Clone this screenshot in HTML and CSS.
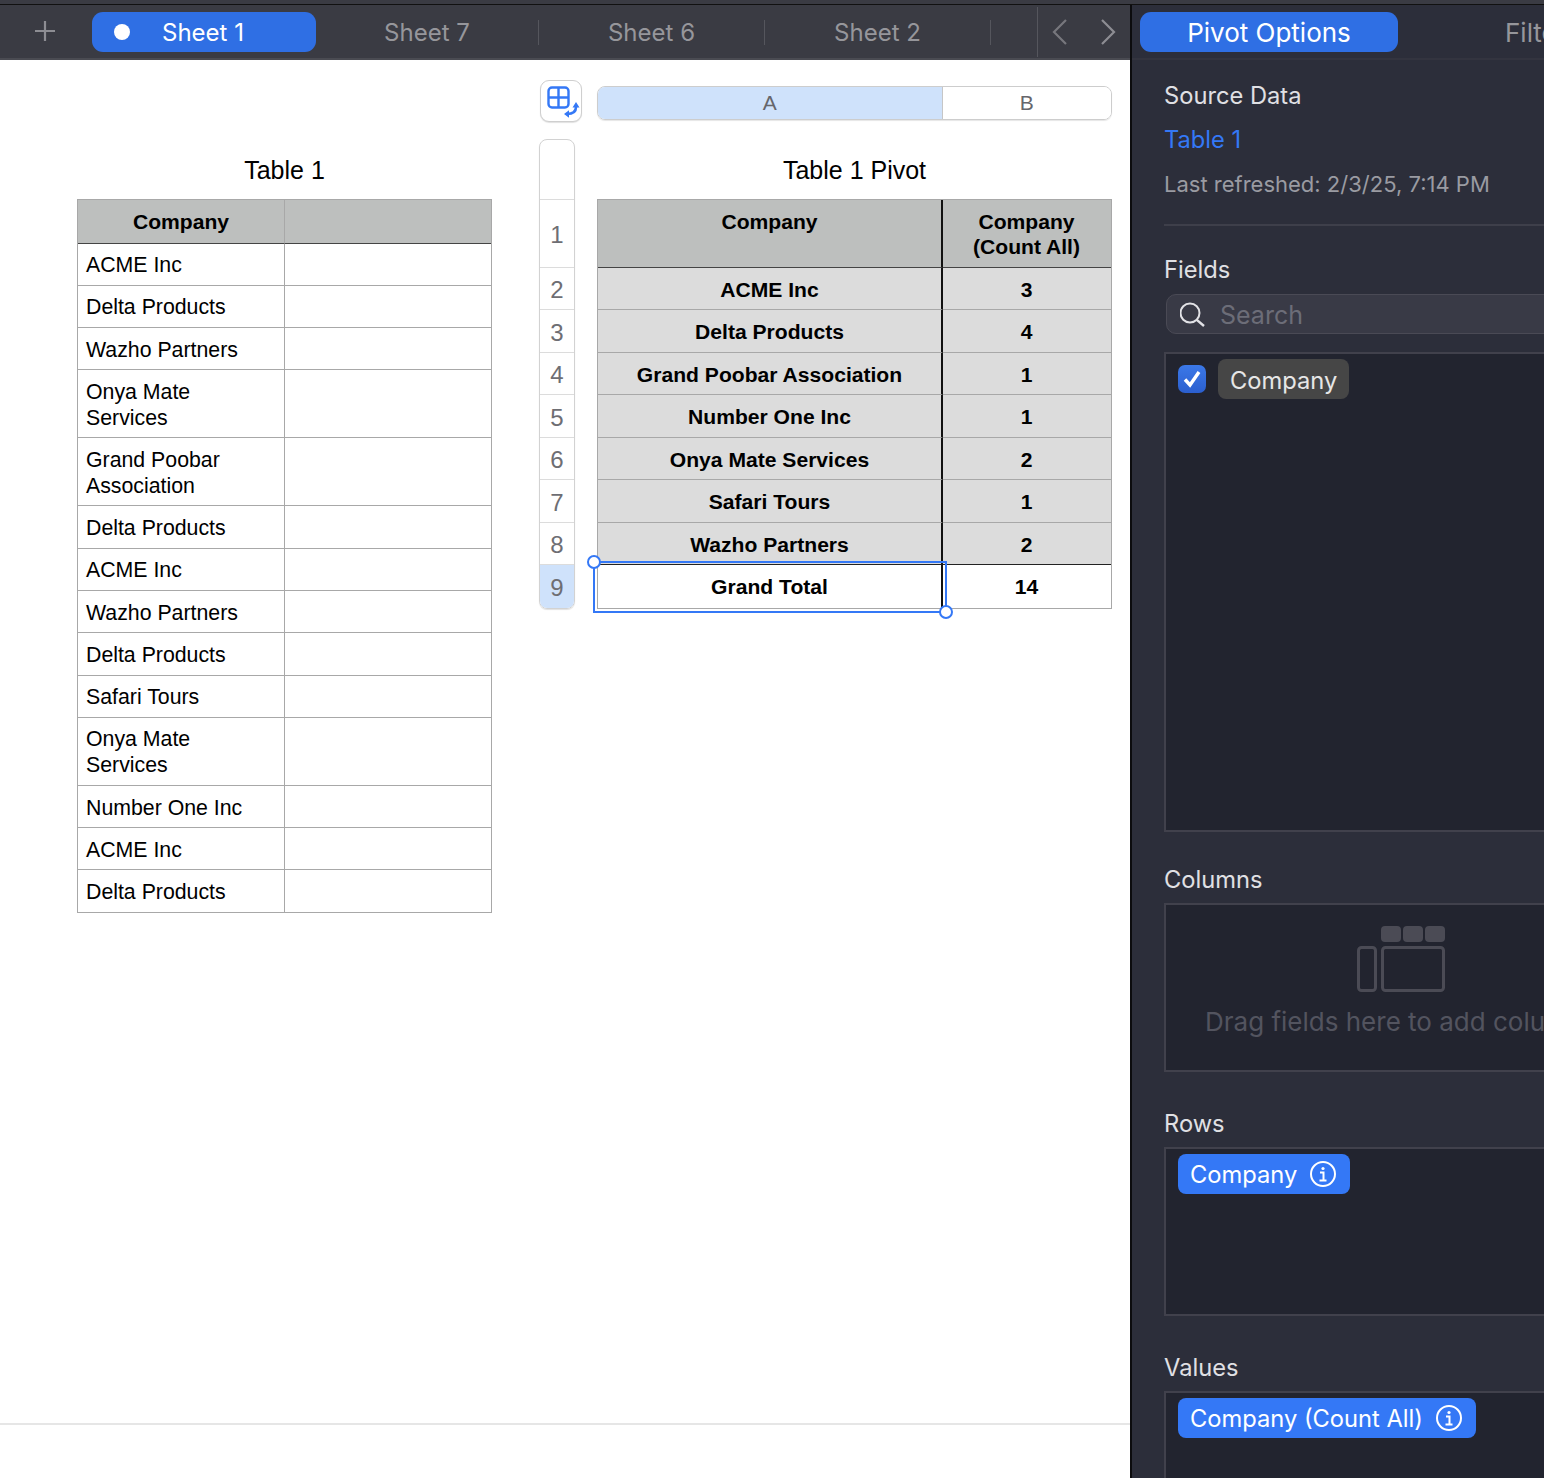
FILE: index.html
```html
<!DOCTYPE html>
<html lang="en">
<head>
<meta charset="utf-8">
<title>Pivot Options</title>
<link rel="stylesheet" href="styles.css">
</head>
<body>
<div class="topstrip"></div>
<div class="app">
  <main class="doc">
    <nav class="tabbar">
      <svg class="plus" width="22" height="22" viewBox="0 0 22 22"><path d="M11 1v20M1 11h20" stroke="#8d8d93" stroke-width="2.2" fill="none"/></svg>
      <div class="tab active"><span class="dot"></span><span>Sheet 1</span></div>
      <div class="tab second">Sheet 7</div>
      <div class="tab">Sheet 6</div>
      <div class="tab">Sheet 2</div>
      <div class="navs">
        <svg width="18" height="28" viewBox="0 0 18 28"><path d="M15 2 3 14l12 12" stroke="#77777d" stroke-width="2.2" fill="none"/></svg>
        <svg width="18" height="28" viewBox="0 0 18 28"><path d="M3 2l12 12L3 26" stroke="#8d8d93" stroke-width="2.2" fill="none"/></svg>
      </div>
    </nav>
    <section class="canvas">
      <div class="tblock first">
        <h2 class="ttitle">Table 1</h2>
        <div class="grid plain">
          <div class="c hd">Company</div><div class="c hd"></div>
          <div class="c">ACME Inc</div><div class="c"></div>
          <div class="c">Delta Products</div><div class="c"></div>
          <div class="c">Wazho Partners</div><div class="c"></div>
          <div class="c two">Onya Mate<br>Services</div><div class="c two"></div>
          <div class="c two">Grand Poobar<br>Association</div><div class="c two"></div>
          <div class="c">Delta Products</div><div class="c"></div>
          <div class="c">ACME Inc</div><div class="c"></div>
          <div class="c">Wazho Partners</div><div class="c"></div>
          <div class="c">Delta Products</div><div class="c"></div>
          <div class="c">Safari Tours</div><div class="c"></div>
          <div class="c two">Onya Mate<br>Services</div><div class="c two"></div>
          <div class="c">Number One Inc</div><div class="c"></div>
          <div class="c">ACME Inc</div><div class="c"></div>
          <div class="c last">Delta Products</div><div class="c last"></div>
        </div>
      </div>
      <div class="pivotwrap">
        <div class="corner">
          <svg width="36" height="36" viewBox="0 0 36 36">
            <rect x="4.500" y="3.500" width="20" height="20" rx="3.500" fill="none" stroke="#3478f6" stroke-width="2.400"/>
            <path d="M14.500 3.500v20M4.500 13.500h20" stroke="#3478f6" stroke-width="2.400" fill="none"/>
            <path d="M32 23c0 4.500-3 7-9 7" stroke="#3478f6" stroke-width="2.600" fill="none"/>
            <path d="M32 18l3.500 5.500h-7zM20 30l5-3.800v7.600z" fill="#3478f6"/>
          </svg>
        </div>
        <div class="colhead"><div class="ch sel">A</div><div class="ch">B</div></div>
        <div class="rowhead">
          <div class="rh blank"></div>
          <div class="rh tall">1</div>
          <div class="rh">2</div><div class="rh">3</div><div class="rh">4</div><div class="rh">5</div>
          <div class="rh">6</div><div class="rh">7</div><div class="rh">8</div>
          <div class="rh sel">9</div>
        </div>
        <div class="tblock">
          <h2 class="ttitle">Table 1 Pivot</h2>
          <div class="grid pivot">
            <div class="p hd tall">Company</div><div class="p hd tall">Company<br>(Count All)</div>
            <div class="p">ACME Inc</div><div class="p">3</div>
            <div class="p">Delta Products</div><div class="p">4</div>
            <div class="p">Grand Poobar Association</div><div class="p">1</div>
            <div class="p">Number One Inc</div><div class="p">1</div>
            <div class="p">Onya Mate Services</div><div class="p">2</div>
            <div class="p">Safari Tours</div><div class="p">1</div>
            <div class="p prelast">Wazho Partners</div><div class="p prelast">2</div>
            <div class="p total">Grand Total</div><div class="p total">14</div>
            <div class="selection"><span class="handle tl"></span><span class="handle br"></span></div>
          </div>
        </div>
      </div>
    </section>
    <footer class="docfoot"></footer>
  </main>
  <aside class="panel">
    <nav class="ptabs">
      <div class="ptab active">Pivot Options</div>
      <div class="ptab">Filters</div>
    </nav>
    <div class="pbody">
      <div class="source">
        <div class="label">Source Data</div>
        <div class="link">Table 1</div>
        <div class="muted">Last refreshed: 2/3/25, 7:14 PM</div>
      </div>
      <div class="label fields">Fields</div>
      <div class="search">
        <svg width="28" height="28" viewBox="0 0 28 28"><circle cx="10" cy="13" r="9.500" fill="none" stroke="#e2e2e6" stroke-width="2"/><path d="M16.800 19.800 24 26" stroke="#e2e2e6" stroke-width="2.400" fill="none"/></svg>
        <span>Search</span>
      </div>
      <div class="box fieldlist">
        <div class="check"><svg width="22" height="22" viewBox="0 0 22 22"><path d="M4 11.500 9 17 18 4" stroke="#fff" stroke-width="3.400" fill="none"/></svg></div>
        <div class="chip gray">Company</div>
      </div>
      <div class="label after cols">Columns</div>
      <div class="box empty">
        <svg width="88" height="66" viewBox="0 0 88 66">
          <rect x="24" y="0" width="20" height="16" rx="4" fill="#4b4b55"/>
          <rect x="46" y="0" width="20" height="16" rx="4" fill="#4b4b55"/>
          <rect x="68" y="0" width="20" height="16" rx="4" fill="#4b4b55"/>
          <rect x="1.500" y="21.500" width="17" height="43" rx="3" fill="none" stroke="#4b4b55" stroke-width="3"/>
          <rect x="25.500" y="21.500" width="61" height="43" rx="3" fill="none" stroke="#4b4b55" stroke-width="3"/>
        </svg>
        <div class="hint">Drag fields here to add columns</div>
      </div>
      <div class="label after">Rows</div>
      <div class="box drop">
        <div class="chip blue">Company
          <svg width="28" height="28" viewBox="0 0 28 28"><circle cx="14" cy="14" r="12" fill="none" stroke="#fff" stroke-width="2"/><circle cx="14" cy="8.500" r="1.600" fill="#fff"/><path d="M11 12.500h3.500V20M10.500 20.500h7" stroke="#fff" stroke-width="2" fill="none"/></svg>
        </div>
      </div>
      <div class="label after">Values</div>
      <div class="box drop">
        <div class="chip blue">Company (Count All)
          <svg width="28" height="28" viewBox="0 0 28 28"><circle cx="14" cy="14" r="12" fill="none" stroke="#fff" stroke-width="2"/><circle cx="14" cy="8.500" r="1.600" fill="#fff"/><path d="M11 12.500h3.500V20M10.500 20.500h7" stroke="#fff" stroke-width="2" fill="none"/></svg>
        </div>
      </div>
    </div>
  </aside>
</div>
```

FILE: styles.css
```css
* { box-sizing: border-box; }
html, body { margin: 0; height: 100%; }
body {
  width: 1544px;
  height: 1478px;
  overflow: hidden;
  background: #fff;
  font-family: "Liberation Sans", Arial, sans-serif;
  display: flex;
  flex-direction: column;
}
.topstrip { flex: none; height: 5px; background: #3a3b43; border-bottom: 1px solid #111; }
.app { flex: 1; display: flex; min-height: 0; }

/* document side */
.doc { width: 1130px; flex: none; display: flex; flex-direction: column; background: #fff; }
.tabbar {
  height: 55px;
  flex: none;
  background: #3a3b43;
  border-bottom: 2px solid #4a4b52;
  display: flex;
  align-items: center;
  font-family: Inter, sans-serif;
  font-size: 24px;
  color: #96969b;
}
.plus { margin: 0 36px 1px 34px; flex: none; }
.tab {
  height: 40px;
  width: 226px;
  padding-right: 1px;
  display: flex;
  align-items: center;
  justify-content: center;
  margin-top: 1px;
  position: relative;
}
.tab.second { width: 223px; }
.tab::after {
  content: "";
  position: absolute;
  right: 0;
  top: 8px;
  height: 25px;
  width: 1px;
  background: #55565d;
}
.tab.active {
  width: 224px;
  background: #2f6fe4;
  border-radius: 11px;
  color: #fff;
  justify-content: flex-start;
  padding-left: 22px;
  gap: 32px;
}
.tab.active::after { display: none; }
.dot { width: 16px; height: 16px; border-radius: 50%; background: #fff; }
.navs {
  margin-left: 46px;
  height: 50px;
  flex: 1;
  border-left: 1px solid #55565d;
  display: flex;
  align-items: center;
  gap: 30px;
  padding-left: 13px;
}
.canvas { flex: 1; display: flex; align-items: flex-start; padding-left: 77px; min-height: 0; }
.tblock.first { margin-top: 79px; width: 415px; }
.ttitle {
  margin: 0;
  height: 60px;
  padding-top: 17px;
  line-height: 28px;
  font-size: 25px;
  font-weight: 400;
  text-align: center;
  color: #000;
}
.grid { display: grid; border: 1px solid #a8a8a8; }
.plain { grid-template-columns: 207px 206px; font-size: 21.300px; line-height: 26px; color: #000; }
.c {
  height: 42.300px;
  display: flex;
  align-items: center;
  padding: 2px 8px 0;
  border-bottom: 1px solid #a8a8a8;
}
.c:nth-child(odd) { border-right: 1px solid #a8a8a8; }
.c.two { height: 68px; }
.c.last { height: 41.800px; border-bottom: 0; }
.c.hd {
  height: 43.500px;
  padding-top: 2px;
  background: #bdbfbe;
  font-size: 21.100px;
  font-weight: 700;
  justify-content: center;
  border-bottom: 1px solid #444;
}
.pivotwrap {
  margin-left: 47px;
  margin-top: 20px;
  display: grid;
  grid-template-columns: 58px 515px;
  grid-template-rows: 59px auto;
}
.corner {
  width: 42px;
  height: 42px;
  margin-left: 1px;
  border: 1px solid #cfcfcf;
  border-radius: 9px;
  background: #fff;
  padding: 3px;
  box-shadow: 0 1px 1px rgba(0, 0, 0, .12);
}
.corner svg { display: block; }
.colhead {
  height: 34px;
  margin-top: 6px;
  display: flex;
  border: 1px solid #cdcdcd;
  border-radius: 8px;
  overflow: hidden;
  box-shadow: 0 1px 1px rgba(0, 0, 0, .1);
  font-size: 21px;
  color: #66666b;
}
.ch { width: 168px; padding-right: 1px; display: flex; align-items: center; justify-content: center; background: #fff; }
.ch.sel { width: 346px; background: #cfe2fb; border-right: 1px solid #c6c6c6; }
.rowhead {
  width: 36px;
  height: 470px;
  border: 1px solid #d2d2d2;
  border-radius: 8px;
  overflow: hidden;
  box-shadow: 0 1px 1px rgba(0, 0, 0, .12);
  font-size: 24px;
  color: #6e6e73;
}
.rh {
  height: 42.500px;
  padding-top: 4px;
  display: flex;
  align-items: center;
  justify-content: center;
  border-bottom: 1px solid #dcdcdc;
}
.rh.blank { height: 59.500px; }
.rh.tall { height: 68px; }
.rh.sel { height: 44px; padding-top: 1px; background: #cfe2fb; border-bottom: 0; }
.pivot {
  position: relative;
  grid-template-columns: 345px 168px;
  font-size: 21.100px;
  line-height: 26px;
  font-weight: 700;
  text-align: center;
  color: #000;
}
.p {
  height: 42.500px;
  padding-top: 3px;
  display: flex;
  align-items: center;
  justify-content: center;
  background: #dcdcdc;
  border-bottom: 1px solid #a8a8a8;
}
.p:nth-child(odd) { border-right: 2px solid #111; }
.p:nth-child(even) { padding-right: 1px; }
.p.hd { background: #bdbfbe; align-items: flex-start; padding-top: 9px; line-height: 25px; border-bottom: 1px solid #444; }
.p.tall { height: 67.500px; }
.p.prelast { border-bottom: 1px solid #222; }
.p.total { height: 42.500px; padding-top: 2px; background: #fff; border-bottom: 0; }
.selection {
  position: absolute;
  left: -5px;
  top: 361px;
  width: 354px;
  height: 52px;
  border: 2px solid #3478f6;
}
.handle {
  position: absolute;
  width: 14px;
  height: 14px;
  border: 2px solid #3478f6;
  border-radius: 50%;
  background: #fff;
}
.handle.tl { left: -8px; top: -8px; }
.handle.br { right: -8px; bottom: -8px; }
.docfoot { height: 55px; flex: none; border-top: 2px solid #e6e6e6; margin-top: auto; }

/* inspector side */
.panel {
  flex: 1;
  min-width: 0;
  overflow: hidden;
  border-left: 2px solid #0c0c0e;
  background: #2c2e3a;
  font-family: Inter, sans-serif;
  font-size: 23.700px;
  color: #e0e0e4;
}
.ptabs {
  height: 55px;
  display: flex;
  align-items: center;
  border-bottom: 2px solid #33343f;
  padding-left: 8px;
  white-space: nowrap;
  font-size: 26px;
  color: #96969b;
}
.ptab { margin-top: 1px; }
.ptab.active {
  width: 258px;
  height: 40px;
  flex: none;
  display: flex;
  align-items: center;
  justify-content: center;
  background: #2f6fe4;
  border-radius: 11px;
  color: #fff;
  margin-right: 107px;
}
.pbody { padding-left: 32px; width: 506px; }
.label { line-height: 30px; }
.source { height: 166px; padding-top: 21px; border-bottom: 2px solid #3e3f4a; }
.link { color: #3478f6; line-height: 30px; margin-top: 14px; }
.muted { color: #9a9ba2; font-size: 22px; line-height: 30px; margin-top: 14px; }
.fields { margin-top: 29px; }
.search {
  height: 40px;
  margin: 9px 0 18px 2px;
  border: 1px solid #4a4a55;
  border-radius: 10px;
  background: #393a46;
  display: flex;
  align-items: center;
  gap: 12px;
  padding: 2px 0 0 13px;
  font-size: 25px;
  color: #6c6d78;
}
.search svg { margin-top: -2px; }
.box {
  width: 474px;
  border: 2px solid #41414c;
  background: #22242f;
  position: relative;
}
.fieldlist { height: 480px; display: flex; align-items: flex-start; padding: 5px 0 0 12px; }
.check {
  width: 28px;
  height: 28px;
  margin: 6px 12px 0 0;
  border-radius: 7px;
  background: linear-gradient(#3b78e8, #2b5fcf);
  display: flex;
  align-items: center;
  justify-content: center;
}
.chip {
  height: 40px;
  display: inline-flex;
  align-items: center;
  padding: 0 12px;
  border-radius: 8px;
  white-space: nowrap;
  color: #fff;
}
.chip.gray { background: #464646; color: #e6e6e6; padding-top: 2px; }
.chip.blue { background: #3478f6; gap: 12px; padding-right: 13px; }
.after { margin-top: 37px; margin-bottom: 8px; }
.after.cols { margin-top: 33px; }
.empty { height: 169px; display: flex; flex-direction: column; align-items: center; padding-top: 21px; }
.hint { margin-top: 15px; color: #53545f; font-size: 26px; line-height: 30px; white-space: nowrap; }
.drop { height: 169px; padding: 5px 0 0 12px; }
```
